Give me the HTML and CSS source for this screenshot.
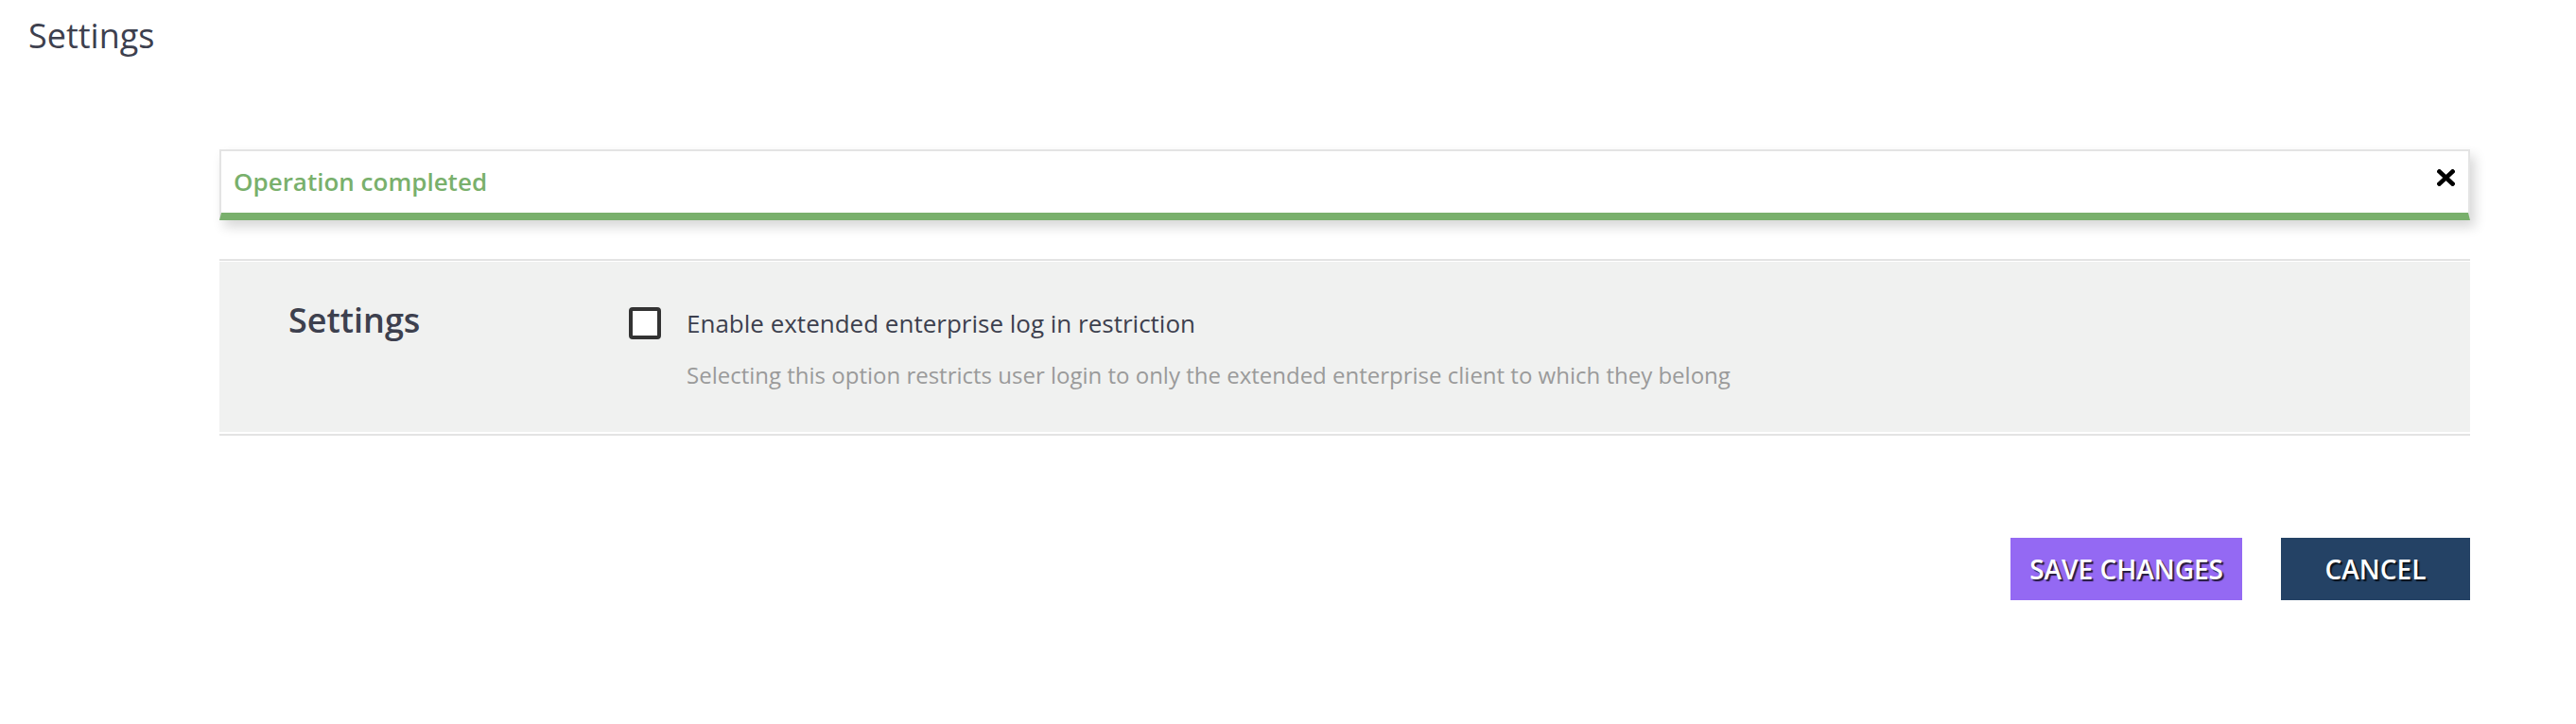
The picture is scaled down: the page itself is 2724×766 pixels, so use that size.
FILE: index.html
```html
<!DOCTYPE html>
<html lang="en">
<head>
<meta charset="utf-8">
<title>Settings</title>
<link rel="stylesheet" href="styles.css">
</head>
<body>
<header class="page-header">
  <h1 class="page-title">Settings</h1>
</header>
<main class="content">
  <div class="alert">
    <span class="alert-text">Operation completed</span>
    <button class="alert-close" aria-label="Close">
      <svg width="19" height="18" viewBox="0 0 19 18"><path d="M2.5 2.5 L16.5 15.5 M16.5 2.5 L2.5 15.5" stroke="#000" stroke-width="4.6" stroke-linecap="square" fill="none"/></svg>
    </button>
  </div>
  <section class="panel">
    <div class="panel-inner">
      <h2 class="panel-heading">Settings</h2>
      <div class="option">
        <span class="checkbox"></span>
        <div class="option-text">
          <div class="option-label">Enable extended enterprise log in restriction</div>
          <div class="option-desc">Selecting this option restricts user login to only the extended enterprise client to which they belong</div>
        </div>
      </div>
    </div>
  </section>
  <div class="actions">
    <button class="btn btn-save">SAVE CHANGES</button>
    <button class="btn btn-cancel">CANCEL</button>
  </div>
</main>
</body>
</html>
```
FILE: styles.css
```css
* { box-sizing: border-box; }
body {
  margin: 0;
  background: #fff;
  font-family: "Open Sans", "Noto Sans", sans-serif;
  color: #3d404e;
}
.page-header {
  padding: 20px 0 0 30px;
}
.page-title {
  margin: 0;
  font-size: 36px;
  line-height: 36px;
  font-weight: 400;
  color: #3d404e;
}
.content {
  margin: 102px 112px 0 232px;
}
.alert {
  display: flex;
  align-items: flex-start;
  justify-content: space-between;
  border: 2px solid #e4e4e4;
  border-bottom: 8px solid #79b06c;
  background: #fff;
  padding: 19px 14px 19px 13px;
  box-shadow: 5px 7px 12px rgba(0, 0, 0, 0.16);
}
.alert-text {
  font-size: 26px;
  line-height: 27px;
  font-weight: 600;
  color: #79b06c;
}
.alert-close {
  border: 0;
  background: none;
  padding: 0;
  margin-top: 0;
  width: 19px;
  height: 18px;
  display: block;
}
.alert-close svg { display: block; }
.panel {
  margin-top: 41px;
  border-top: 2px solid #e3e3e3;
  border-bottom: 2px solid #e3e3e3;
  padding: 1px 0 2px;
}
.panel-inner {
  background: #f0f1f0;
  display: flex;
  align-items: flex-start;
  padding: 48px 0 45px 73px;
}
.panel-heading {
  margin: 0;
  width: 360px;
  font-size: 36px;
  line-height: 27px;
  font-weight: 600;
  color: #3d404e;
}
.option {
  display: flex;
  align-items: flex-start;
  gap: 27px;
}
.checkbox {
  width: 34px;
  height: 34px;
  border: 4px solid #333;
  border-radius: 4px;
  background: #fff;
  flex: none;
}
.option-label {
  font-size: 26px;
  line-height: 34px;
  color: #3d404e;
}
.option-desc {
  margin-top: 23px;
  font-size: 24px;
  line-height: 30px;
  color: #9a9a9a;
}
.actions {
  margin-top: 108px;
  display: flex;
  justify-content: flex-end;
  gap: 41px;
}
.btn {
  border: 0;
  height: 66px;
  min-width: 200px;
  padding: 0 20px;
  font-family: "Open Sans", "Noto Sans", sans-serif;
  font-size: 28px;
  line-height: 66px;
  font-weight: 600;
  color: #fff;
  text-shadow: 2px 2px 1px rgba(0, 0, 0, 0.75);
  cursor: pointer;
}
.btn-save { background: #9469f3; }
.btn-cancel { background: #244265; }
```
